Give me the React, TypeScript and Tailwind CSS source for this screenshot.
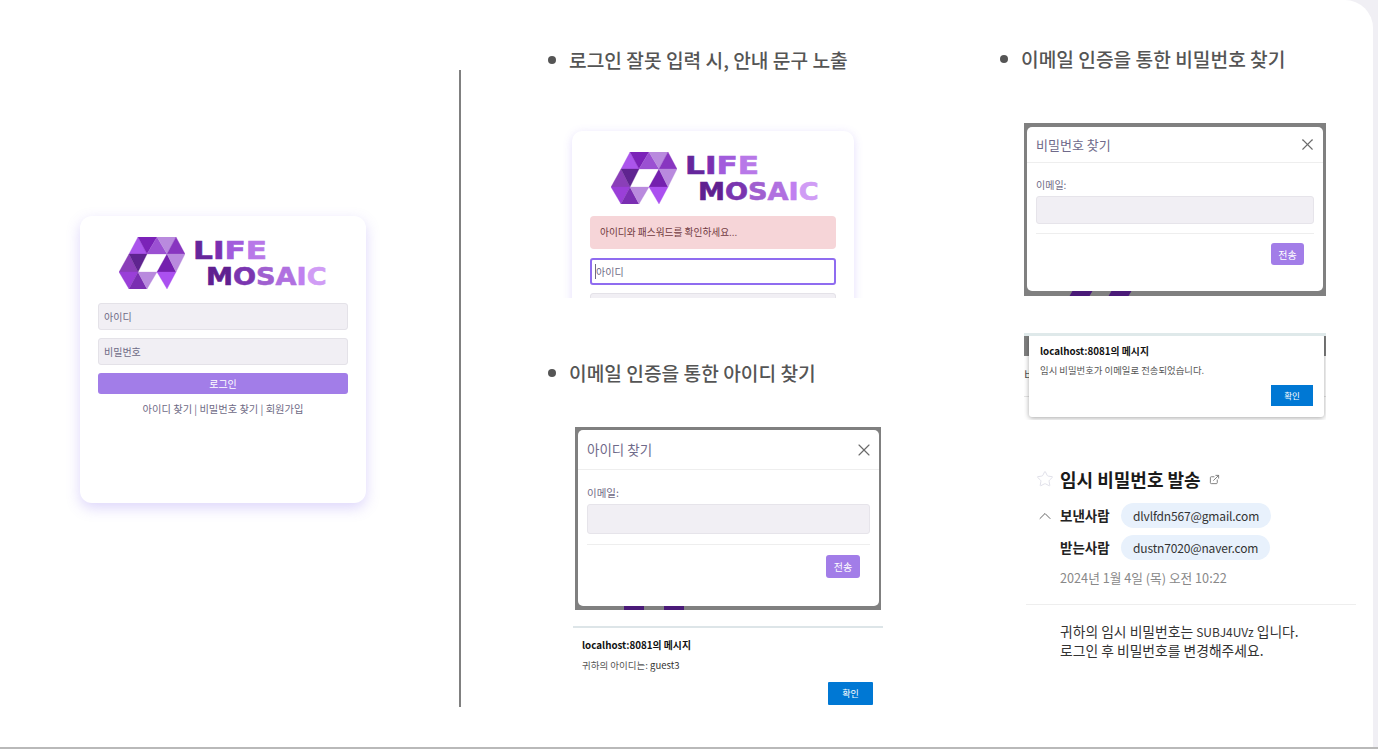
import { ChevronUp, ExternalLink, Star, X } from 'lucide-react';

const TRIANGLES: [string, string][] = [
  ['19,0 10,17 28,17', '#ab55ec'],
  ['19,0 38,0 28,17', '#7b22b8'],
  ['38,0 28,17 48,17', '#9b50d2'],
  ['38,0 57,0 48,17', '#b98ade'],
  ['57,0 48,17 66,17', '#8835c0'],
  ['10,17 0,35 19,35', '#8a3fb8'],
  ['10,17 28,17 19,35', '#5f2490'],
  ['48,17 38,35 57,35', '#7420ae'],
  ['48,17 66,17 57,35', '#b98ade'],
  ['0,35 19,35 10,52', '#9a3fd8'],
  ['19,35 10,52 28,52', '#7a2eb2'],
  ['19,35 38,35 28,52', '#b98ade'],
  ['38,35 57,35 48,52', '#ab50f0'],
];

function Logo() {
  return (
    <div className="flex items-start">
      <svg viewBox="0 0 66 52" className="w-[66px] h-[52px] shrink-0">
        {TRIANGLES.map(([points, fill]) => (
          <polygon key={points} points={points} fill={fill} stroke={fill} strokeWidth={0.3} />
        ))}
      </svg>
      <div className="ml-2 font-['DejaVu_Sans',sans-serif] font-bold text-[24px] leading-[26px] pt-[1px] [-webkit-text-stroke:0.6px]">
        <div className="scale-x-[1.3] origin-left">
          <span className="text-[#65269c]">L</span>
          <span className="text-[#7a2fb0]">I</span>
          <span className="text-[#a25cdc]">F</span>
          <span className="text-[#b878e8]">E</span>
        </div>
        <div className="ml-[13px] scale-x-[1.13] origin-left whitespace-nowrap">
          <span className="text-[#5f2090]">M</span>
          <span className="text-[#7a35b0]">O</span>
          <span className="text-[#a060d0]">S</span>
          <span className="text-[#b070e0]">A</span>
          <span className="text-[#c080f0]">I</span>
          <span className="text-[#d09cf5]">C</span>
        </div>
      </div>
    </div>
  );
}

function Heading({ children }: { children: string }) {
  return (
    <div className="flex items-center gap-[13px] text-[#555] text-[19.2px] font-medium leading-[28px] whitespace-nowrap">
      <span className="w-[8px] h-[8px] rounded-full bg-[#555]" />
      {children}
    </div>
  );
}

function Field({ label }: { label: string }) {
  return (
    <div className="h-[27px] rounded-[3px] bg-[#f1eff4] border border-[#e4e2e8] px-[5px] flex items-center text-[10px] text-[#6e6a85]">
      {label}
    </div>
  );
}

function LoginCard() {
  return (
    <div className="w-[286px] h-[287px] rounded-[12px] bg-white shadow-[0_5px_14px_rgba(120,90,240,0.25)] px-[18px] pt-[21px]">
      <div className="pl-[21px]">
        <Logo />
      </div>
      <div className="mt-[13px] flex flex-col gap-[8px]">
        <Field label="아이디" />
        <Field label="비밀번호" />
      </div>
      <div className="mt-[8px] h-[21px] rounded-[3px] bg-[#a27de8] text-white text-[10px] flex items-center justify-center">
        로그인
      </div>
      <div className="mt-[8px] text-center text-[10.25px] leading-[14px] text-[#6e6a85]">
        아이디 찾기 | 비밀번호 찾기 | 회원가입
      </div>
    </div>
  );
}

function ErrorCard() {
  return (
    <div className="h-[174px] overflow-hidden w-[300px] px-[9px] pt-[7px]">
      <div className="w-[282px] h-[240px] rounded-[10px] bg-white shadow-[0_2px_10px_rgba(120,90,240,0.2)] px-[18px] pt-[21px]">
        <div className="pl-[21px]">
          <Logo />
        </div>
        <div className="mt-[11px] h-[33px] rounded-[4px] bg-[#f6d5d8] px-[10px] flex items-center text-[9.7px] text-[#713a40]">
          아이디와 패스워드를 확인하세요...
        </div>
        <div className="mt-[9px] h-[27px] rounded-[3px] bg-white border-2 border-[#8f6cf0] px-[3px] flex items-center text-[10px] text-[#6e6a85]">
          <span className="border-l border-[#6e6a85]">아이디</span>
        </div>
        <div className="mt-[8px] h-[27px] rounded-[3px] bg-[#f1eff4] border border-[#e4e2e8]" />
      </div>
    </div>
  );
}

type ModalProps = { title: string; wide?: boolean };

function Modal({ title, wide }: ModalProps) {
  return (
    <div className={wide ? 'w-[306px] h-[183px] bg-[#808080] pt-[3px] pl-[3px] pr-[2px]' : 'w-[302px] h-[173px] bg-[#808080] pt-[4px] px-[3px]'}>
      <div className={wide ? 'h-[176px] bg-white rounded-[5px] flex flex-col' : 'h-[164px] bg-white rounded-[5px] flex flex-col'}>
        <div className={wide ? 'h-[40px] px-[9px] border-b border-[#eeeeee] flex items-center justify-between' : 'h-[36px] px-[9px] border-b border-[#eeeeee] flex items-center justify-between'}>
          <span className={wide ? 'text-[13.5px] text-[#6f6a8a]' : 'text-[13px] text-[#6f6a8a]'}>{title}</span>
          <X className={wide ? 'text-[#6b6b6b] mr-[-4px]' : 'text-[#6b6b6b] mr-[-3px]'} size={wide ? 20 : 19} strokeWidth={1.4} />
        </div>
        <div className={wide ? 'px-[9px] pt-[16px]' : 'px-[9px] pt-[15px]'}>
          <div className={wide ? 'text-[10.5px] leading-[14px] text-[#6f6a85]' : 'text-[10px] leading-[14px] text-[#6f6a85]'}>이메일:</div>
          <div className={wide ? 'mt-[4px] h-[30px] rounded-[3px] bg-[#f1eff4] border border-[#e6e4ea]' : 'mt-[4px] h-[28px] rounded-[3px] bg-[#f1eff4] border border-[#e6e4ea]'} />
          <div className={wide ? 'mt-[10px] border-t border-[#eeeeee] flex justify-end pt-[10px] pr-[10px]' : 'mt-[9px] border-t border-[#eeeeee] flex justify-end pt-[9px] pr-[10px]'}>
            <div className={wide ? 'w-[34px] h-[23px] rounded-[3px] bg-[#a27de8] text-white text-[10px] flex items-center justify-center' : 'w-[33px] h-[22px] rounded-[3px] bg-[#a27de8] text-white text-[10px] flex items-center justify-center'}>
              전송
            </div>
          </div>
        </div>
      </div>
      <div className={wide ? 'flex h-[4px] pl-[46px] gap-[20px]' : 'flex h-[5px] pl-[44px] gap-[19px]'}>
        <span className={wide ? 'w-[20px] bg-[#4a1a78]' : 'w-[20px] bg-[#4a1a78] -skew-x-[30deg]'} />
        <span className={wide ? 'w-[20px] bg-[#4a1a78]' : 'w-[20px] bg-[#4a1a78] -skew-x-[30deg]'} />
      </div>
    </div>
  );
}

function AlertBox() {
  return (
    <div className="w-[310px] border-t-[2px] border-[#dde5e8] h-[82px] px-[9px] pt-[10px] relative">
      <div className="text-[9.8px] leading-[14px] font-bold text-[#111]">localhost:8081의 메시지</div>
      <div className="mt-[6px] text-[9.5px] leading-[14px] text-[#555]">
        귀하의 아이디는: <span className="text-[#333]">guest3</span>
      </div>
      <div className="absolute right-[10px] top-[54px] w-[45px] h-[23px] bg-[#0078d4] rounded-[1px] text-white text-[9px] flex items-center justify-center">
        확인
      </div>
    </div>
  );
}

function AlertOverModal() {
  return (
    <div className="relative w-[302px] h-[87px] border-t-[3px] border-[#dfe9ea] overflow-hidden">
      <div className="h-[20px] bg-[#808080]" />
      <div className="h-[41px] border-b border-[#e5e5e5] pt-[11px] text-[12px] leading-[16px] text-[#555]">비</div>
      <div className="absolute left-[5px] right-[2px] top-[-2px] h-[83px] bg-white rounded-[3px] shadow-[0_1px_5px_rgba(0,0,0,0.35)] pl-[11px] pt-[10px]">
        <div className="text-[9.8px] leading-[14px] font-bold text-[#111]">localhost:8081의 메시지</div>
        <div className="mt-[5px] text-[9.4px] leading-[14px] text-[#555]">임시 비밀번호가 이메일로 전송되었습니다.</div>
        <div className="absolute right-[11px] top-[51px] w-[42px] h-[21px] bg-[#0078d4] text-white text-[8.5px] flex items-center justify-center">
          확인
        </div>
      </div>
    </div>
  );
}

function Address({ label, email }: { label: string; email: string }) {
  return (
    <div className="flex items-center h-[25px] pl-[34px]">
      <span className="w-[61px] text-[13.5px] font-semibold text-[#222]">{label}</span>
      <span className="h-[25px] rounded-full bg-[#e8f1fc] px-[12px] flex items-center text-[12px] tracking-[-0.15px] text-[#333] whitespace-nowrap">
        {email}
      </span>
    </div>
  );
}

function Mail() {
  return (
    <div className="w-[330px] ml-[26px]">
      <div className="flex items-center pl-[10px] h-[24px]">
        <Star className="text-[#dcdce6]" size={18} strokeWidth={1.2} />
        <span className="ml-[6px] text-[18px] font-bold text-[#1a1a1a]">임시 비밀번호 발송</span>
        <ExternalLink className="ml-[8px] text-[#777]" size={11} />
      </div>
      <div className="mt-[12px] relative">
        <ChevronUp className="absolute left-[9px] top-[3px] text-[#666]" size={20} strokeWidth={1.2} />
        <Address label="보낸사람" email="dlvlfdn567@gmail.com" />
      </div>
      <div className="mt-[7px]">
        <Address label="받는사람" email="dustn7020@naver.com" />
      </div>
      <div className="mt-[9px] pl-[34px] text-[12.7px] leading-[18px] text-[#888]">2024년 1월 4일 (목) 오전 10:22</div>
      <div className="mt-[17px] border-t border-[#eeeeee]" />
      <div className="mt-[17px] pl-[34px] text-[13.8px] leading-[18px] text-[#333]">
        <div>귀하의 임시 비밀번호는 <span className="text-[12px]">SUBJ4UVz</span> 입니다.</div>
        <div>로그인 후 비밀번호를 변경해주세요.</div>
      </div>
    </div>
  );
}

export default function App() {
  return (
    <div className="w-[1378px] h-[749px] overflow-hidden bg-[#f0eff4] font-['Noto_Sans_CJK_KR','Noto_Sans',sans-serif]">
      <main className="w-[1373px] h-[747px] bg-white rounded-tr-[28px] flex">
        <section className="w-[459px] shrink-0 pl-[80px] pt-[216px]">
          <LoginCard />
        </section>
        <div className="w-[2px] h-[637px] mt-[70px] bg-[#808080] shrink-0" />
        <section className="w-[539px] shrink-0 pl-[87px] pt-[46px]">
          <Heading>로그인 잘못 입력 시, 안내 문구 노출</Heading>
          <div className="mt-[50px] ml-[15px]">
            <ErrorCard />
          </div>
          <div className="mt-[61px]">
            <Heading>이메일 인증을 통한 아이디 찾기</Heading>
          </div>
          <div className="mt-[40px] ml-[27px]">
            <Modal title="아이디 찾기" wide />
          </div>
          <div className="mt-[16px] ml-[25px]">
            <AlertBox />
          </div>
        </section>
        <section className="flex-1 pt-[45px]">
          <Heading>이메일 인증을 통한 비밀번호 찾기</Heading>
          <div className="mt-[50px] ml-[24px]">
            <Modal title="비밀번호 찾기" />
          </div>
          <div className="mt-[37px] ml-[24px]">
            <AlertOverModal />
          </div>
          <div className="mt-[47px]">
            <Mail />
          </div>
        </section>
      </main>
      <div className="h-[2px] bg-[#b9b9b9]" />
    </div>
  );
}
